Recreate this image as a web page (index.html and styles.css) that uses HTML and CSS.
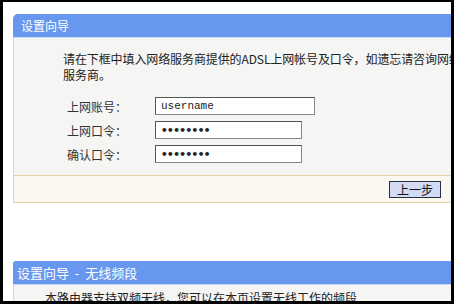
FILE: index.html
```html
<!DOCTYPE html>
<html lang="zh-CN">
<head>
    <meta charset="UTF-8">
    <title>设置向导</title>
    <link rel="stylesheet" href="styles.css">
</head>
<body>
    <div class="screen">
        <!-- ADSL account step -->
        <div class="panel">
            <div class="panel-title">设置向导</div>
            <div class="panel-body">
                <p class="intro"><span class="line">请在下框中填入网络服务商提供的ADSL上网帐号及口令，如遗忘请咨询网络</span><br>服务商。</p>
                <form class="fields">
                    <label for="user">上网账号：</label>
                    <input type="text" id="user" class="long" value="username">
                    <label for="pass">上网口令：</label>
                    <input type="password" id="pass" value="12345678">
                    <label for="confirm">确认口令：</label>
                    <input type="password" id="confirm" value="12345678">
                </form>
            </div>
            <div class="panel-foot">
                <button type="button">上一步</button>
            </div>
        </div>

        <!-- wireless band step -->
        <div class="panel next">
            <div class="panel-title small">设置向导&nbsp;&nbsp;-&nbsp;&nbsp;无线频段</div>
            <div class="panel-body tight">
                <p class="intro">本路由器支持双频无线，您可以在本页设置无线工作的频段</p>
            </div>
        </div>
    </div>
</body>
</html>
```

FILE: styles.css
```css
body {
    margin: 0;
    height: 304px;
    background-color: #000;
    overflow: hidden;
    font-family: "Noto Sans CJK SC", "DejaVu Sans", sans-serif;
    font-size: 12px;
    color: #222;
}
.screen {
    margin: 2px 0 0 3px;
    width: 448px;
    height: 299px;
    background-color: #fff;
    overflow: hidden;
}
.panel {
    margin: 12px 0 0 10px;
    width: 441px;
}
.panel.next {
    margin-top: 58px;
}
.panel-title {
    height: 23px;
    line-height: 23px;
    padding-left: 8px;
    background-color: #6797ee;
    color: #fff;
    border-top-left-radius: 5px;
    border-bottom: 1px solid #c9daf5;
}
.panel-title.small {
    padding-left: 4px;
    font-size: 13px;
    border-top-left-radius: 3px;
}
.panel-body {
    background-color: #f5f5f4;
    border-left: 1px solid #e8d9b8;
    padding: 13px 0 12px 49px;
    overflow: hidden;
}
.panel-body.tight {
    padding: 5px 0 0 31px;
    height: 40px;
}
.intro {
    margin: 0;
    line-height: 16px;
    white-space: nowrap;
}
.line {
    letter-spacing: -0.1px;
}
.fields {
    display: grid;
    grid-template-columns: 88px auto;
    row-gap: 6px;
    margin: 14px 0 0 4px;
    align-items: center;
}
.fields label {
    color: #333;
}
.fields input {
    box-sizing: border-box;
    width: 147px;
    height: 18px;
    padding: 0 5px;
    border: 1px solid #555;
    border-right-color: #888;
    border-bottom-color: #888;
    background-color: #fff;
    font-family: "Liberation Mono", monospace;
    font-size: 11px;
    color: #222;
}
.fields input[type="password"] {
    font-family: "DejaVu Sans Mono", monospace;
    font-weight: bold;
    letter-spacing: -0.5px;
}
.fields input.long {
    width: 160px;
}
.panel-foot {
    display: flex;
    justify-content: flex-end;
    height: 26px;
    padding-right: 13px;
    align-items: center;
    background-color: #faf7f0;
    border-top: 1px solid #e2d1aa;
    border-bottom: 1px solid #e2d1aa;
    border-left: 1px solid #e8d9b8;
}
button {
    width: 52px;
    height: 17px;
    padding: 0;
    background-color: #d3daf3;
    border: 1px solid #2a2f45;
    font-family: "Noto Sans CJK SC", sans-serif;
    font-size: 12px;
    line-height: 15px;
    color: #111;
}
```
